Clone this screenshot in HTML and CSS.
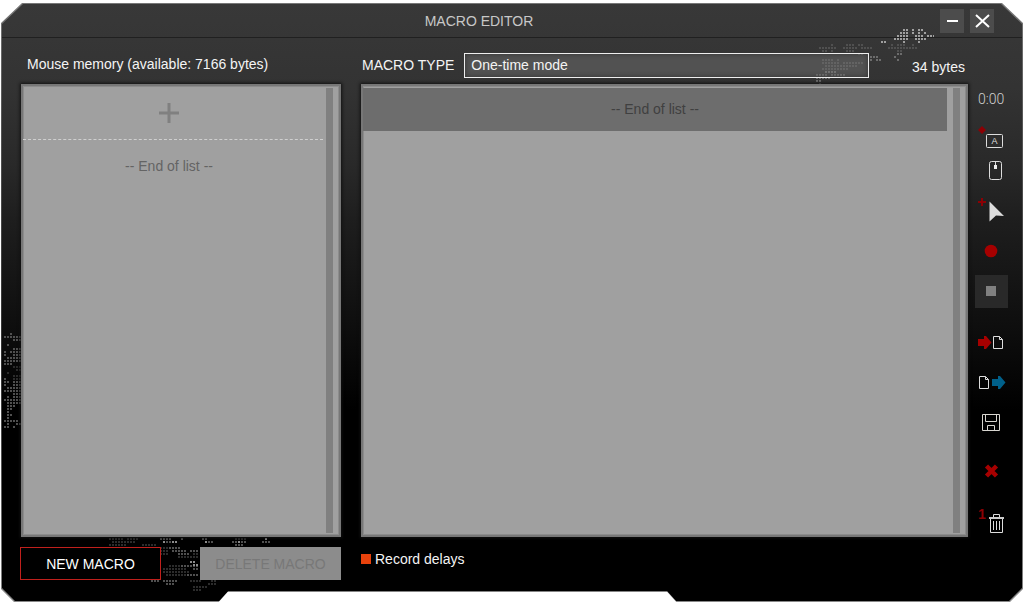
FILE: index.html
```
<!DOCTYPE html>
<html lang="en">
<head>
<meta charset="utf-8">
<title>Macro Editor</title>
<link rel="stylesheet" href="styles.css">
</head>
<body>
<div class="frame">
<div class="window">
  <svg class="decor decor-top" width="120" height="60" viewBox="0 0 120 60" aria-hidden="true">
    <g class="dots bright"><path d="M89 6h5M98 6h2M104 6h5M86 9h8M98 9h2M104 9h2M110 9h2M83 12h11M101 12h8M113 12h8M80 15h14M101 15h5M107 15h5M67 18h5M89 18h2M104 18h2"/></g>
    <g class="dots dim"><path d="M17 21h2M32 21h8M44 21h5M77 21h2M83 21h8M98 21h2M5 24h17M29 24h14M47 24h11M74 24h29M8 27h5M17 27h2M32 27h8M83 27h5M80 33h2"/></g>
    <g class="dots mid"><path d="M44 30h5M53 30h2M83 30h5M56 33h8M80 33h2M56 36h2M62 36h5M83 36h2"/></g>
    <g class="dots dim"><path d="M8 36h11M23 36h2M8 39h17M29 39h20M11 42h32M8 45h17M26 45h8"/></g>
    <g class="dots mid"><path d="M11 48h11M2 51h11M17 51h14M2 54h14M2 57h5M5 60h2"/></g>
  </svg>
  <svg class="decor decor-left" width="18" height="96" viewBox="0 0 18 96" aria-hidden="true">
    <g class="dots mid"><path d="M7 2h2M1 5h8M10 5h8M10 8h8M4 13h2M10 17h8M1 20h2M7 20h11M1 23h2M10 23h8M4 26h14M1 29h8M10 29h8M1 32h5M7 32h2"/></g>
    <g class="dots dim"><path d="M10 35h8M13 38h5M4 41h2M10 44h8M10 47h8"/></g>
    <g class="dots mid"><path d="M1 47h2M1 50h5M10 50h8M1 53h2M10 53h8M4 56h14M1 59h17M10 62h8M4 65h2M10 65h8M1 68h11M13 68h5M4 71h8M13 71h5M4 74h8M4 77h5M4 80h2M4 83h5M4 86h2M1 89h8M10 89h5M4 92h2M13 92h5M1 95h5M10 95h2"/></g>
  </svg>
  <svg class="decor decor-bottom" width="170" height="54" viewBox="0 0 170 54" aria-hidden="true">
    <g class="dots dim"><path d="M2 2h14M20 2h11M5 5h23M2 8h17M128 2h11M35 8h14M53 11h8M38 14h23M41 17h8M53 17h8M62 29h20M56 35h26M56 32h23M59 38h20M38 41h8M86 17h6M71 20h20M86 50h14M110 38h23M104 41h17M83 44h11M104 44h5M86 53h8M101 47h8"/></g>
    <g class="dots mid"><path d="M53 2h11M59 5h11M74 2h2M125 5h14M128 8h8M95 2h5M101 5h5M155 5h8M62 11h11M65 14h14M71 17h11M83 14h8M83 29h8M86 32h5M80 38h11M56 44h14M44 44h8M59 47h8M74 29h8"/></g>
    <g class="dots bright"><path d="M56 5h2M65 5h5M83 25h5M86 28h5M98 5h2M131 5h2M158 2h2"/></g>
  </svg>

  <header class="titlebar">
    <h1 class="title">MACRO EDITOR</h1>
    <div class="window-buttons">
      <button class="window-button" type="button" aria-label="Minimize"><svg width="24" height="24" viewBox="0 0 24 24"><path d="M7 12h11" stroke="#fff" stroke-width="2"/></svg></button>
      <button class="window-button" type="button" aria-label="Close"><svg width="24" height="24" viewBox="0 0 24 24"><path d="M6 6l13 12M19 6L6 18" stroke="#fff" stroke-width="2"/></svg></button>
    </div>
  </header>

  <main class="workspace">
    <section class="memory">
      <h2 class="panel-title">Mouse memory (available: 7166 bytes)</h2>
      <div class="list">
        <div class="list-rows memory-rows">
          <button class="add-row" type="button" aria-label="Add macro"><svg width="20" height="20" viewBox="0 0 20 20"><path d="M0 10h20M10 0v20" stroke="#808080" stroke-width="3"/></svg></button>
          <p class="list-end">-- End of list --</p>
        </div>
        <div class="scroll-track"></div>
      </div>
      <div class="memory-actions">
        <button class="action action-new" type="button">NEW MACRO</button>
        <button class="action action-delete" type="button" disabled>DELETE MACRO</button>
      </div>
    </section>

    <section class="editor">
      <div class="type-bar">
        <label for="macro-type">MACRO TYPE</label>
        <select class="type-select" id="macro-type"><option>One-time mode</option></select>
        <span class="size">34 bytes</span>
      </div>
      <div class="list">
        <div class="list-rows">
          <p class="list-end selected">-- End of list --</p>
        </div>
        <div class="scroll-track"></div>
      </div>
      <div class="record-options">
        <label class="delay"><input class="delay-box" type="checkbox" checked>Record delays</label>
      </div>
    </section>

    <aside class="tools">
      <span class="timer">0:00</span>
      <div class="tool-group">
        <button class="tool short" type="button" aria-label="Add key"><svg width="36" height="30" viewBox="0 0 36 30"><path d="M9 0l2 2 2 2-2 2-2 2-2-2-2-2 2-2z" fill="#8c0004"/><rect x="13.5" y="8.500" width="16" height="13" rx="1" fill="none" stroke="#ddd"/><text class="key-letter" x="21.500" y="18" text-anchor="middle">A</text></svg></button>
        <button class="tool short" type="button" aria-label="Add mouse button"><svg width="36" height="30" viewBox="0 0 36 30"><rect x="16.500" y="5.500" width="12" height="18" rx="2" fill="none" stroke="#ddd"/><path d="M22.500 6v4" stroke="#ddd"/><path d="M21 9h3v4h-3z" fill="#eee"/></svg></button>
      </div>
      <div class="tool-group">
        <button class="tool" type="button" aria-label="Add cursor position"><svg width="36" height="40" viewBox="0 0 36 40"><path d="M8 7h2v3h3v2h-3v3H8v-3H5v-2h3z" fill="#8c0004"/><path d="M16.500 10.500L31 25l-8-.5L16.500 30.500z" fill="#ddd"/></svg></button>
        <button class="tool" type="button" aria-label="Record"><svg width="36" height="40" viewBox="0 0 36 40"><circle cx="18" cy="20" r="6.300" fill="#a60000"/></svg></button>
        <button class="tool" type="button" aria-label="Stop" disabled><svg width="36" height="40" viewBox="0 0 36 40"><path d="M2 4h33v33H2z" fill="#292929"/><path d="M13 15h10v10H13z" fill="#808080"/></svg></button>
      </div>
      <div class="tool-group files">
        <button class="tool" type="button" aria-label="Import"><svg width="36" height="40" viewBox="0 0 36 40"><path d="M5 16h6v-3h2l5.500 6.500-5.500 6.500h-2v-3H5z" fill="#a60000"/><path d="M20.500 13.500h6l3 3v9h-9zM26.500 13.500v3h3" fill="none" stroke="#ddd"/></svg></button>
        <button class="tool" type="button" aria-label="Export"><svg width="36" height="40" viewBox="0 0 36 40"><path d="M6.500 13.500h6l3 3v9h-9zM12.500 13.500v3h3" fill="none" stroke="#ddd"/><path d="M19 16h6v-3h2l5.500 6.500-5.500 6.500h-2v-3h-6z" fill="#00608a"/></svg></button>
        <button class="tool" type="button" aria-label="Save"><svg width="36" height="40" viewBox="0 0 36 40"><path d="M9.500 11.500h17v16h-17zM12.500 11.500v7h11v-7M14.500 27.500v-5h7v5" fill="none" stroke="#d8d6d0"/></svg></button>
      </div>
      <div class="tool-group removal">
        <button class="tool" type="button" aria-label="Remove"><svg width="36" height="40" viewBox="0 0 36 40"><path d="M13.500 15l10 10M23.500 15l-10 10" stroke="#a60000" stroke-width="4.500"/></svg></button>
        <button class="tool" type="button" aria-label="Remove all"><svg width="36" height="40" viewBox="0 0 36 40"><text class="clear-count" x="5" y="16">1</text><path d="M20.500 14v-2.500h6V14M17.500 15v14.500h12V15M20.500 18v9M23.500 18v9M26.500 18v9" fill="none" stroke="#ddd"/><path d="M16 14h15v2H16z" fill="#ccc"/></svg></button>
      </div>
    </aside>
  </main>
</div>
</div>
</body>
</html>
```
FILE: styles.css
```
* { box-sizing: border-box; }

body {
  margin: 0;
  background: #fff;
  font: 14px/20px "Liberation Sans", Arial, sans-serif;
  color: #f4f4f4;
}

.frame, .window {
  clip-path: polygon(21px 0, calc(100% - 21px) 0, 100% 20px, 100% calc(100% - 13px), calc(100% - 13px) 100%, calc(65.2% + 9px) 100%, 65.2% calc(100% - 10px), calc(21.3% + 9px) calc(100% - 10px), 21.3% 100%, 13px 100%, 0 calc(100% - 13px), 0 20px);
}

.frame {
  display: flex;
  min-height: calc(100vh - 5px);
  margin: 3px 0 2px 1px;
  padding: 1px;
  background: linear-gradient(#777, #555 20%, #333 60%, #888);
}

.window {
  position: relative;
  display: flex;
  flex: 1;
  flex-direction: column;
  background: linear-gradient(#383838, #333 14%, #292929 27%, #1e1e1e 36%, #0e0e0e 54%, #000 68%);
}

.decor { position: absolute; }
.decor-top { top: 20px; right: 88px; }
.decor-left { top: 328px; left: 1px; }
.decor-bottom { bottom: 10px; left: 105px; }

.dots { fill: none; stroke-width: 2; stroke-dasharray: 2 1; }
.bright { stroke: #a0a0a0; }
.mid { stroke: #6c6c6c; }
.dim { stroke: #505050; }
.decor-bottom .dim, .decor-left .dim { stroke: #2c2c2c; }
.decor-bottom .mid, .decor-left .mid { stroke: #505050; }
.decor-bottom .bright { stroke: #8c8c8c; }

.titlebar, .workspace { position: relative; }

.titlebar {
  display: grid;
  grid-template-columns: 1fr auto 1fr;
  align-items: center;
  height: 34px;
  border-bottom: 1px solid #202020;
  padding-right: 28px;
}

.title {
  grid-column: 2;
  margin: 0 38px 0 0;
  padding: 0;
  font-size: 14px;
  font-weight: 400;
  color: #c8c8c8;
}

.window-buttons { display: flex; gap: 6px; justify-self: end; }

button { font: inherit; cursor: pointer; }
button svg { display: block; }

.window-button {
  width: 24px;
  height: 24px;
  padding: 0;
  border: 0;
  background: #4c4c4c;
}

.workspace {
  display: grid;
  flex: 1;
  grid-template-columns: 320px minmax(0, 1fr) 36px;
  padding: 0 13px 0 19px;
}

.memory, .editor { display: flex; flex-direction: column; }
.editor { margin: 0 5px 0 20px; }

.panel-title, .type-bar { height: 46px; margin: 0; }

.panel-title {
  padding: 16px 6px 0;
  font-size: 14px;
  font-weight: 400;
}

.type-bar {
  display: flex;
  align-items: center;
  gap: 10px;
  padding: 8px 3px 0 1px;
}

.type-select {
  flex: 1;
  height: 25px;
  padding: 0 6px;
  border: 1px solid #eee;
  border-radius: 0;
  background: rgba(128, 128, 128, 0.4);
  box-shadow: inset 0 0 5px #333;
  color: #f4f4f4;
  font: inherit;
  appearance: none;
}

.size { width: 86px; padding-top: 4px; text-align: right; }

.list {
  display: flex;
  flex: 1;
  padding-right: 6px;
  border: 2px solid #777;
  background: #a0a0a0;
  box-shadow: 0 0 3px 1px #111, inset 0 0 0 1px #8c8c8c;
}

.list-rows { flex: 1; }
.memory-rows { padding-right: 3px; }

.add-row {
  display: flex;
  align-items: center;
  justify-content: center;
  width: 100%;
  height: 54px;
  padding: 0 8px 0 0;
  border: 0;
  border-bottom: 1px dashed #d0d0d0;
  background: none;
}

.list-end {
  margin: 0;
  padding: 16px 8px 16px 0;
  text-align: center;
  color: #646464;
}

.editor .list-rows { padding: 2px 6px 0 0; }
.list-end.selected { padding: 11px 0 12px; background: #6d6d6d; color: #404040; }

.scroll-track { width: 7px; margin: 2px 0; background: #808080; }

.memory-actions, .record-options { height: 64px; padding-top: 10px; }
.record-options { padding-top: 12px; }

.memory-actions { display: flex; justify-content: space-between; }

.action { width: 141px; height: 33px; padding: 0; border: 1px solid; }
.action-new { margin-left: -1px; border-color: #c0201c; background: #000; color: #fff; }
.action-delete { border-color: #8c8c8c; background: #8c8c8c; color: #787878; }

.delay { display: inline-flex; align-items: center; gap: 4px; }

.delay-box {
  width: 10px;
  height: 10px;
  margin: 0;
  background: #e8420c;
  appearance: none;
}

.tools { display: flex; flex-direction: column; padding-top: 46px; }

.timer {
  height: 30px;
  padding-left: 5px;
  font: 300 14px/30px Roboto, sans-serif;
  color: #d0d0d0;
}

.tool-group { display: flex; flex-direction: column; }
.timer + .tool-group { margin: 12px 0 5px; }
.files { margin: 12px 0 8px; }
.removal { gap: 12px; }

.tool { width: 36px; height: 40px; padding: 0; border: 0; background: none; }
.tool.short { height: 30px; }

.key-letter { font: 9px "Liberation Sans", sans-serif; fill: #ddd; }
.clear-count { font: bold 14px "Liberation Sans", sans-serif; fill: #8c0004; }
```
